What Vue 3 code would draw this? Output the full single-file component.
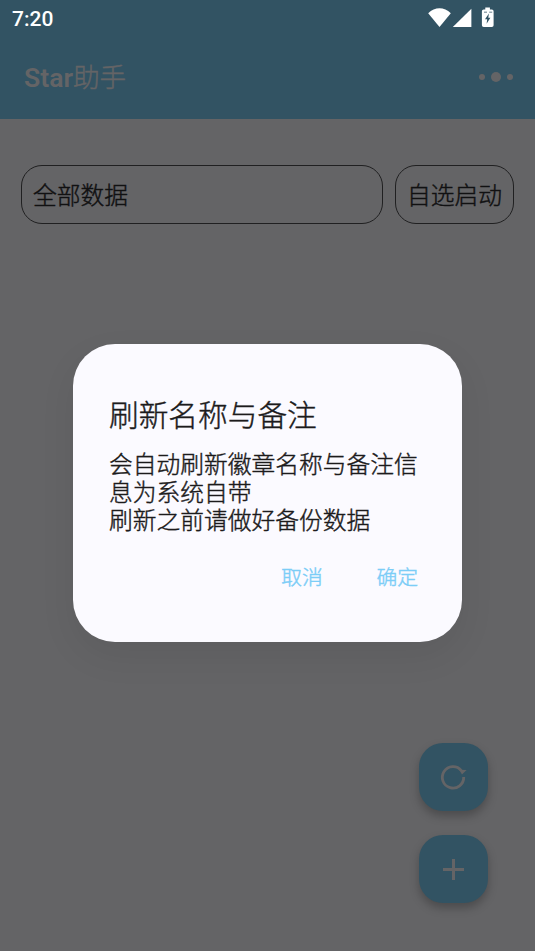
<script setup>
const filters = { data: '全部数据', launch: '自选启动' }
const messages = ['会自动刷新徽章名称与备注信息为系统自带', '刷新之前请做好备份数据']
</script>

<template>
  <div class="screen">
    <header class="top">
      <div class="status">
        <span class="time">7:20</span>
        <svg class="status-icons" width="68" height="24" viewBox="0 0 68 24">
          <path d="M0.2 5.2C6.8-1.5 16.2-1.5 22.8 5.2L11.5 19Z" fill="#fff" />
          <path d="M43.4 0.8V19H24.8Z" fill="#fff" />
          <path d="M57.3 -0.4H61.9V1.4H63.8Q65.6 1.4 65.6 3.2V17.2Q65.6 19 63.8 19H55.7Q53.9 19 53.9 17.2V3.2Q53.9 1.4 55.7 1.4H57.3Z" fill="#fff" />
          <path d="M60.9 5.4L57 11.3H59.2L58.6 15.7L62.4 9.7H60.3ZM56 3.7H59V4.5H56ZM61.2 3.7H64.2V4.5H61.2Z" fill="#325363" />
        </svg>
      </div>
      <div class="appbar">
        <h1 class="title"><b class="latin">Star</b>助手</h1>
        <div class="more"><i class="dot"></i><i class="dot big"></i><i class="dot"></i></div>
      </div>
    </header>

    <main class="filters">
      <button class="chip wide">{{ filters.data }}</button>
      <button class="chip">{{ filters.launch }}</button>
    </main>

    <div class="fabs">
      <button class="fab" aria-label="刷新">
        <svg width="34" height="34" viewBox="0 0 34 34">
          <path d="M25.3 10.6A10.7 10.7 0 1 0 27.7 17" fill="none" stroke="#646466" stroke-width="2.8" />
          <path d="M23.2 9.8L30.6 10L26 14.6Z" fill="#646466" />
        </svg>
      </button>
      <button class="fab" aria-label="添加">
        <svg width="34" height="34" viewBox="0 0 34 34">
          <path d="M7 17.5H28M17.5 7V28" fill="none" stroke="#646466" stroke-width="3" />
        </svg>
      </button>
    </div>

    <div class="overlay">
      <section class="dialog" role="dialog">
        <h2 class="heading">刷新名称与备注</h2>
        <p v-for="m in messages" :key="m" class="message">{{ m }}</p>
        <div class="actions">
          <button class="action">取消</button>
          <button class="action">确定</button>
        </div>
      </section>
    </div>
  </div>
</template>

<style>
body {
  background: #646466;
}
</style>

<style scoped>
.screen {
  position: relative;
  box-sizing: border-box;
  height: 951px;
  display: flex;
  flex-direction: column;
  overflow: hidden;
  background: #646466;
  font-family: Roboto, "Noto Sans CJK SC", sans-serif;
  font-weight: 300;
  -webkit-text-stroke: 0.42px currentColor;
}
button {
  margin: 0;
  padding: 0;
  border: 0;
  background: none;
  font: inherit;
}
.top {
  height: 119px;
  flex: none;
  background: #325363;
}
.status {
  height: 36px;
  display: flex;
  justify-content: space-between;
  padding: 0 39px 0 12px;
}
.time {
  font-size: 21px;
  line-height: 38px;
  font-weight: 500;
  color: #fff;
  -webkit-text-stroke: 0;
}
.status-icons {
  margin-top: 8px;
  overflow: visible;
}
.appbar {
  height: 83px;
  display: flex;
  align-items: center;
  justify-content: space-between;
  padding: 0 22px 0 24px;
}
.title {
  margin: 0;
  font-size: 26.6px;
  line-height: 36px;
  font-weight: 300;
  color: #646466;
}
.latin {
  font-weight: 600;
  -webkit-text-stroke: 0;
}
.more {
  display: flex;
  align-items: center;
  gap: 6px;
  margin-top: -1px;
}
.dot {
  width: 6px;
  height: 6px;
  border-radius: 50%;
  background: #646466;
}
.dot.big {
  width: 10px;
  height: 10px;
}
.filters {
  display: flex;
  gap: 12px;
  padding: 46px 21px 0;
}
.chip {
  box-sizing: border-box;
  width: 119px;
  height: 59px;
  padding: 0 0 2px 11px;
  border: 1px solid #202021;
  border-radius: 21px;
  font-size: 23.75px;
  text-align: left;
  color: #111112;
  white-space: nowrap;
}
.chip.wide {
  flex: 1;
}
.fabs {
  display: flex;
  flex-direction: column;
  align-items: flex-end;
  gap: 24px;
  margin-top: auto;
  padding: 0 47.5px 47.6px 0;
}
.fab {
  display: flex;
  align-items: center;
  justify-content: center;
  width: 68.5px;
  height: 68.2px;
  border-radius: 24px;
  background: #325363;
  box-shadow: 0 5px 10px rgba(0, 0, 0, 0.25);
}
.overlay {
  position: absolute;
  inset: 0;
  display: flex;
  justify-content: center;
  align-items: flex-start;
  padding-top: 344px;
}
.dialog {
  box-sizing: border-box;
  width: 389px;
  height: 298.4px;
  padding: 51px 36px 0;
  border-radius: 42px;
  background: #fbfaff;
  color: #1c1b1c;
  box-shadow: 0 14px 36px rgba(0, 0, 0, 0.07);
}
.heading {
  margin: 0 0 13.5px;
  font-size: 29.7px;
  line-height: 42px;
  font-weight: 300;
}
.message {
  margin: 0;
  font-size: 23.75px;
  line-height: 28.3px;
}
.actions {
  display: flex;
  justify-content: flex-end;
  gap: 53.6px;
  margin-top: 27px;
  padding-right: 8px;
}
.action {
  font-size: 20.8px;
  line-height: 32px;
  color: #7ccdf7;
}
</style>
